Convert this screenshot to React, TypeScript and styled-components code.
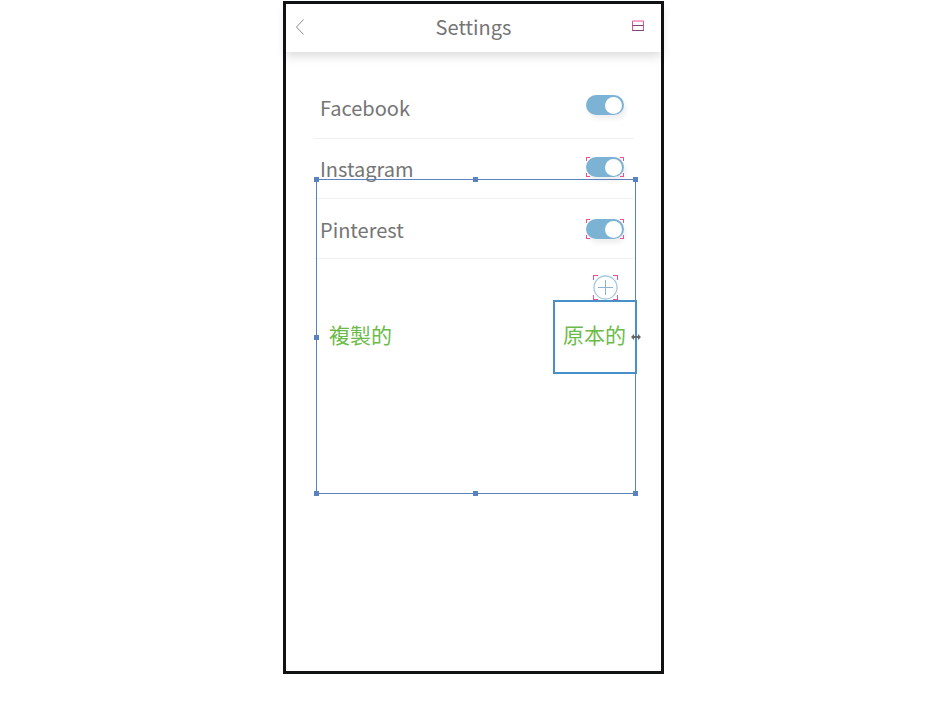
import styled, { createGlobalStyle } from "styled-components";

const GlobalStyle = createGlobalStyle`
html, body {
  margin: 0;
  padding: 0;
  background: #fff;
}
* {
  box-sizing: border-box;
}
body {
  font-family: "Noto Sans CJK TC", "Noto Sans", sans-serif;
  color: #757575;
}
`;

const Page = styled.div`
  width: 948px;
  height: 701px;
  padding: 1px 0 0 283px;
`;

const Phone = styled.div`
  position: relative;
  width: 381px;
  height: 673px;
  border: 3px solid #111214;
  background: #fff;
`;

const Header = styled.header`
  height: 48px;
  padding: 0 17px;
  display: grid;
  grid-template-columns: 1fr auto 1fr;
  align-items: center;
  background: #fff;
  box-shadow: 0 4px 10px rgba(0, 0, 0, 0.15);
`;

const BackIcon = styled.svg`
  margin: 0 0 3px -8px;
`;

const FrameIcon = styled.svg`
  justify-self: end;
  margin-bottom: 4px;
`;

const Title = styled.h1`
  margin: 0 0 3px;
  font-size: 20px;
  font-weight: 400;
  line-height: 45px;
  color: #757575;
`;

const List = styled.ul`
  margin: 27px 27px 0 28px;
  padding: 0;
  list-style: none;
`;

const Row = styled.li<{ $nudge: number }>`
  height: 60px;
  padding: 0 10px 0 6px;
  display: flex;
  align-items: flex-start;
  justify-content: space-between;
  border-bottom: 1px solid #f1f1f1;

  & > span {
    margin-top: ${props => 13 + props.$nudge}px;
  }
  & > div {
    margin-top: ${props => 16 + props.$nudge * 2}px;
  }
`;

const AddRow = styled.li`
  display: flex;
  justify-content: flex-end;
  padding: 16px 16px 0 0;
`;

const Label = styled.span`
  font-size: 20px;
  line-height: 32px;
  color: #757575;
`;

const ticks = (length: number) => `
  background:
    linear-gradient(#ee4f94, #ee4f94) 0 0 / ${length}px 1px,
    linear-gradient(#ee4f94, #ee4f94) 0 0 / 1px ${length}px,
    linear-gradient(#ee4f94, #ee4f94) 100% 0 / ${length}px 1px,
    linear-gradient(#ee4f94, #ee4f94) 100% 0 / 1px ${length}px,
    linear-gradient(#ee4f94, #ee4f94) 0 100% / ${length}px 1px,
    linear-gradient(#ee4f94, #ee4f94) 0 100% / 1px ${length}px,
    linear-gradient(#ee4f94, #ee4f94) 100% 100% / ${length}px 1px,
    linear-gradient(#ee4f94, #ee4f94) 100% 100% / 1px ${length}px;
  background-repeat: no-repeat;
`;

const Toggle = styled.div<{ $marked?: boolean }>`
  position: relative;
  width: 38px;
  height: 20px;
  border-radius: 10px;
  background: #7cb3d5;
  box-shadow: 2px 4px 5px rgba(0, 0, 0, 0.07);

  &::before {
    content: "";
    position: absolute;
    top: 2px;
    right: 2.5px;
    width: 17px;
    height: 17px;
    border-radius: 50%;
    background: #fff;
  }

  &::after {
    content: "";
    display: ${props => (props.$marked ? "block" : "none")};
    position: absolute;
    inset: 0;
    ${ticks(4)}
  }
`;

const AddButton = styled.div`
  width: 25px;
  height: 25px;
  display: flex;
  ${ticks(5)}
`;

const SelectionBox = styled.div`
  position: absolute;
  left: 30px;
  top: 175px;
  width: 320px;
  height: 315px;
  box-shadow: inset 0 0 0 1px #5a82bf;
  display: flex;
  align-items: center;
  padding: 0 0 5px 13px;
`;

const Handle = styled.i<{ $x: string; $y: string }>`
  position: absolute;
  left: calc(${props => props.$x} - 2px);
  top: calc(${props => props.$y} - 2px);
  width: 5px;
  height: 5px;
  background: #5a82bf;
`;

const ResizeCursor = styled.svg`
  position: absolute;
  right: -6px;
  top: 31px;
`;

const Note = styled.span`
  font-size: 21px;
  line-height: 28px;
  color: #6cbb4a;
`;

const OriginalBox = styled.div`
  position: absolute;
  left: 267px;
  top: 296px;
  width: 84px;
  height: 74px;
  border: 2px solid #4a90c8;
  display: flex;
  align-items: center;
  padding: 0 0 7px 8px;
`;

function App() {
  return (
    <>
      <GlobalStyle />
      <Page>
        <Phone>
          <Header>
            <BackIcon width="10" height="18" viewBox="0 0 10 18" fill="none">
              <path d="M8.5 1.5 L1.5 9 L8.5 16.5" stroke="#8a8a8a" strokeWidth="1" />
            </BackIcon>
            <Title>Settings</Title>
            <FrameIcon width="12" height="12" viewBox="0 0 12 12" fill="none">
              <path d="M0.5 1 H11.5 M0.5 1 V11 M11.5 1 V11" stroke="#ee4f94" strokeWidth="1" />
              <path d="M0.5 5.5 H11.5 M0.5 10.5 H11.5" stroke="#7a4a72" strokeWidth="1" />
            </FrameIcon>
          </Header>
          <List>
            <Row $nudge={0}>
              <Label>Facebook</Label>
              <Toggle />
            </Row>
            <Row $nudge={1}>
              <Label>Instagram</Label>
              <Toggle $marked />
            </Row>
            <Row $nudge={2}>
              <Label>Pinterest</Label>
              <Toggle $marked />
            </Row>
            <AddRow>
              <AddButton>
                <svg width="25" height="25" viewBox="0 0 25 25" fill="none">
                  <circle cx="12.5" cy="12.5" r="11.5" stroke="#a4c8e2" strokeWidth="1.3" />
                  <path d="M12.5 5 V20 M5 12.5 H20" stroke="#8ab4d2" strokeWidth="1" />
                </svg>
              </AddButton>
            </AddRow>
          </List>
          <SelectionBox>
            <Note>複製的</Note>
            <Handle $x="0%" $y="0%" />
            <Handle $x="50% - 1px" $y="0%" />
            <Handle $x="100% - 1px" $y="0%" />
            <Handle $x="0%" $y="50%" />
            <Handle $x="0%" $y="100% - 1px" />
            <Handle $x="50% - 1px" $y="100% - 1px" />
            <Handle $x="100% - 1px" $y="100% - 1px" />
          </SelectionBox>
          <OriginalBox>
            <Note>原本的</Note>
            <ResizeCursor width="10" height="8" viewBox="0 0 10 8">
              <path d="M0 4 L3 1 V3 H7 V1 L10 4 L7 7 V5 H3 V7 Z" fill="#666" />
            </ResizeCursor>
          </OriginalBox>
        </Phone>
      </Page>
    </>
  );
}

export default App;
